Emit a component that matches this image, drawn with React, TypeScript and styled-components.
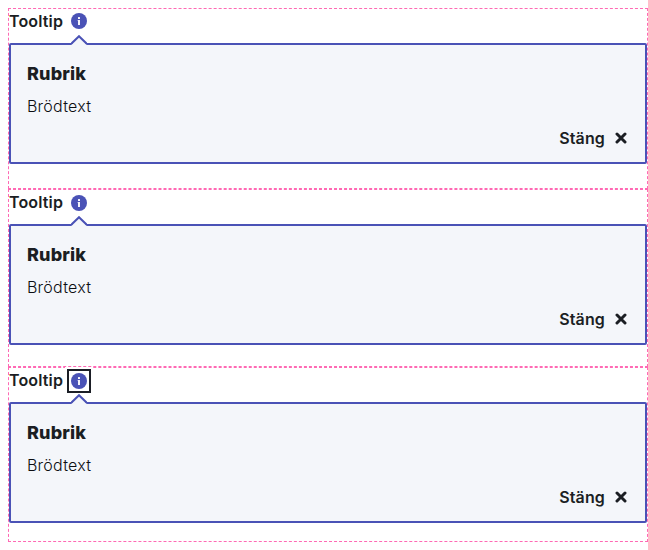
import React from "react";
import styled, { createGlobalStyle, css } from "styled-components";

const Global = createGlobalStyle`
  *, *::before, *::after { box-sizing: border-box; }
  body { margin: 0; padding: 8px 0 0 8px; background: #fff; color: #1b1e23; font-family: Inter, sans-serif; font-size: 16px; overflow: hidden; }
`;

const Variant = styled.section<{ $gap: number }>`
  width: 640px;
  border: 1px dashed #ff69b4;
  padding-bottom: ${(p) => p.$gap}px;
`;

const LabelRow = styled.div`
  display: flex;
  align-items: flex-start;
  gap: 8px;
  height: 24px;
  margin-bottom: 10px;
  font-weight: 600;
  line-height: 24px;
`;

const Label = styled.span`
  width: 54px;
  white-space: nowrap;
  letter-spacing: 0.14px;
`;

const InfoButton = styled.button<{ $focused?: boolean; $offset: number }>`
  display: flex;
  width: 16px;
  height: 16px;
  margin: ${(p) => p.$offset}px 0 0;
  padding: 0;
  border: 0;
  background: #fff;
  ${(p) =>
    p.$focused &&
    css`
      position: relative;
      box-shadow: 0 0 0 2px #fff, 0 0 0 4px #1b1e26, 0 0 0 6px #fff;
    `}
`;

const Card = styled.div`
  position: relative;
  height: 121px;
  padding: 15px 16px 0;
  border: 2px solid #4a52b6;
  border-radius: 2px;
  background: #f4f6fa;
`;

const Arrow = styled.svg`
  position: absolute;
  top: -10px;
  left: 60px;
`;

const Heading = styled.h2`
  margin: 0;
  font-size: 18px;
  line-height: 27px;
  font-weight: 800;
  letter-spacing: 0.16px;
`;

const Body = styled.p`
  margin: 7px 0 0;
  line-height: 24px;
  font-weight: 300;
  letter-spacing: 0.23px;
  color: #0c0e12;
`;

const Footer = styled.div`
  display: flex;
  justify-content: flex-end;
  margin-top: 8px;
`;

const CloseButton = styled.button`
  display: flex;
  align-items: center;
  gap: 10px;
  padding: 0 2px 0 0;
  border: 0;
  background: none;
  color: inherit;
  font: 600 16px/24px Inter, sans-serif;
  letter-spacing: 0.14px;
`;

const variants = [
  { gap: 24, offset: 4, focused: false },
  { gap: 21, offset: 5, focused: false },
  { gap: 18, offset: 5, focused: true },
];

export default function App() {
  return (
    <>
      <Global />
      {variants.map((v) => (
        <Variant key={v.gap} $gap={v.gap}>
          <LabelRow>
            <Label>Tooltip</Label>
            <InfoButton $focused={v.focused} $offset={v.offset} aria-label="Info">
              <svg width="16" height="16" viewBox="0 0 16 16">
                <circle cx="8" cy="8" r="8" fill="#4a52b6" />
                <rect x="7" y="4" width="2" height="2" rx=".5" fill="#fff" />
                <path d="M6.7 7H9v5H7V8h-.3z" fill="#fff" fillOpacity=".92" />
              </svg>
            </InfoButton>
          </LabelRow>
          <Card>
            <Arrow width="16" height="11" viewBox="0 0 16 11">
              <path d="M0 10 8 2 16 10V11H0z" fill="#f4f6fa" />
              <path d="M0 9 8 1.2 16 9" fill="none" stroke="#4a52b6" strokeWidth="2" />
            </Arrow>
            <Heading>Rubrik</Heading>
            <Body>Brödtext</Body>
            <Footer>
              <CloseButton>
                Stäng
                <svg width="12" height="12" viewBox="0 0 12 12">
                  <path d="M2 2l8 8M10 2l-8 8" stroke="currentColor" strokeWidth="3" strokeLinecap="round" />
                </svg>
              </CloseButton>
            </Footer>
          </Card>
        </Variant>
      ))}
    </>
  );
}
